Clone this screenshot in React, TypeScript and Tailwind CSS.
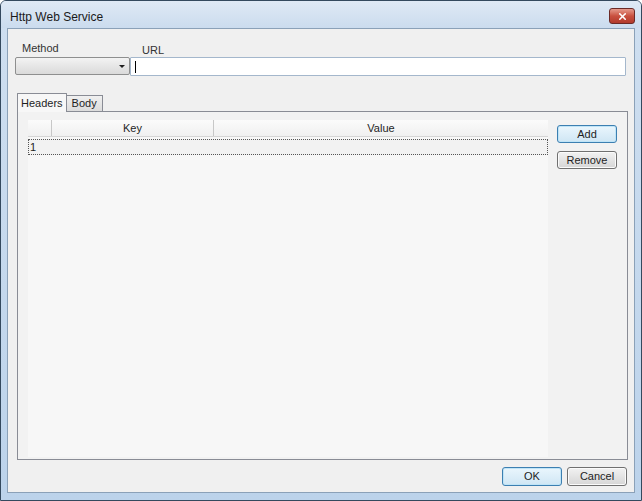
import { X } from 'lucide-react';

const FONT = { fontFamily: '"Liberation Sans", "Noto Sans", sans-serif' };

function WinButton({
  label,
  primary = false,
  tall = true,
}: {
  label: string;
  primary?: boolean;
  tall?: boolean;
}) {
  return (
    <button
      className={
        'w-[60px] rounded-[3px] border text-[11px] leading-none text-[#1e1e1e] ' +
        (tall ? 'h-[19px] ' : 'h-[18px] ') +
        (primary
          ? 'border-[#3c7fb1] bg-gradient-to-b from-[#eaf6fd] to-[#cfe6f4] shadow-[inset_0_0_0_1px_#bfe4f7]'
          : 'border-[#707070] bg-gradient-to-b from-[#f2f2f2] to-[#d6d6d6] shadow-[inset_0_0_0_1px_#fbfbfb]')
      }
    >
      {label}
    </button>
  );
}

export default function App() {
  return (
    <div
      className="w-[642px] h-[501px] flex flex-col bg-gradient-to-b from-[#cfdff0] to-[#bcd3eb] border border-[#34495e] rounded-t-[6px] overflow-hidden text-[11px] text-[#1e1e1e]"
      style={FONT}
    >
      {/* title bar */}
      <div className="h-[27px] flex items-start justify-between pl-[9px] pr-[6px] bg-gradient-to-b from-[#dfe9f5] to-[#cbdcee]">
        <span className="mt-[7px] text-[12px] text-[#1a1a1a]">Http Web Service</span>
        <div className="mt-[7px] w-[26px] h-[16px] rounded-[3px] border border-[#6b2a26] bg-gradient-to-b from-[#e59a8c] via-[#c9503f] to-[#b23a2c] flex items-center justify-center">
          <X className="w-[11px] h-[11px] text-white" strokeWidth={3.5} />
        </div>
      </div>

      {/* client */}
      <div className="flex-1 mx-[6px] border border-[#8ba1b8] bg-[#f0f0f0] flex flex-col">
        <div className="flex pt-[11px]">
          <div className="flex flex-col ml-[7px] w-[115px]">
            <span className="ml-[7px] h-[17px] text-[#333]">Method</span>
            <div className="relative h-[18px] rounded-[2px] border border-[#8e8f8f] bg-gradient-to-b from-[#f3f3f3] to-[#dadada]">
              <span className="absolute right-[4px] top-[7px] w-0 h-0 border-l-[3px] border-r-[3px] border-t-[3px] border-l-transparent border-r-transparent border-t-[#1e1e1e]" />
            </div>
          </div>
          <div className="flex flex-col flex-1 mr-[8px]">
            <span className="ml-[12px] mt-[2px] h-[15px] text-[#333]">URL</span>
            <div className="h-[19px] border border-[#a4b7cc] bg-white rounded-[1px] flex items-center pl-[4px]">
              <span className="w-[1px] h-[12px] bg-black" />
            </div>
          </div>
        </div>

        {/* tabs */}
        <div className="flex items-end mt-[17px] ml-[9px] h-[18px]">
          <div className="relative z-10 h-[19px] -mb-[1px] px-[3px] border border-b-0 border-[#898c95] bg-[#f7f7f7] flex items-center rounded-t-[1px]">
            Headers
          </div>
          <div className="h-[16px] px-[5px] border border-l-0 border-b-0 border-[#898c95] bg-gradient-to-b from-[#f0f0f0] to-[#dcdcdc] flex items-center">
            Body
          </div>
        </div>

        {/* tab panel */}
        <div className="ml-[9px] mr-[6px] h-[349px] border border-[#898c95] bg-[#f2f2f2] flex pt-[8px] pb-[2px] pl-[10px]">
          <div className="w-[520px] h-full bg-[#f7f7f7] flex flex-col">
            <div className="h-[17px] flex border-b border-[#d5d5d5] bg-gradient-to-b from-[#fbfbfb] to-[#f0f0f0]">
              <div className="w-[24px] border-r border-[#c8c8c8]" />
              <div className="w-[162px] border-r border-[#c8c8c8] flex items-center justify-center">Key</div>
              <div className="flex-1 flex items-center justify-center">Value</div>
            </div>
            <div className="mt-[2px] h-[16px] border border-dotted border-[#555] bg-[#f2f2f2] flex items-center pl-[1px]">
              1
            </div>
          </div>
          <div className="flex flex-col gap-[8px] ml-[9px] mt-[5px]">
            <WinButton label="Add" primary tall={false} />
            <WinButton label="Remove" tall={false} />
          </div>
        </div>

        {/* footer buttons */}
        <div className="flex justify-end gap-[5px] mt-[7px] mr-[7px]">
          <WinButton label="OK" primary />
          <WinButton label="Cancel" />
        </div>
      </div>
      <div className="h-[7px]" />
    </div>
  );
}
